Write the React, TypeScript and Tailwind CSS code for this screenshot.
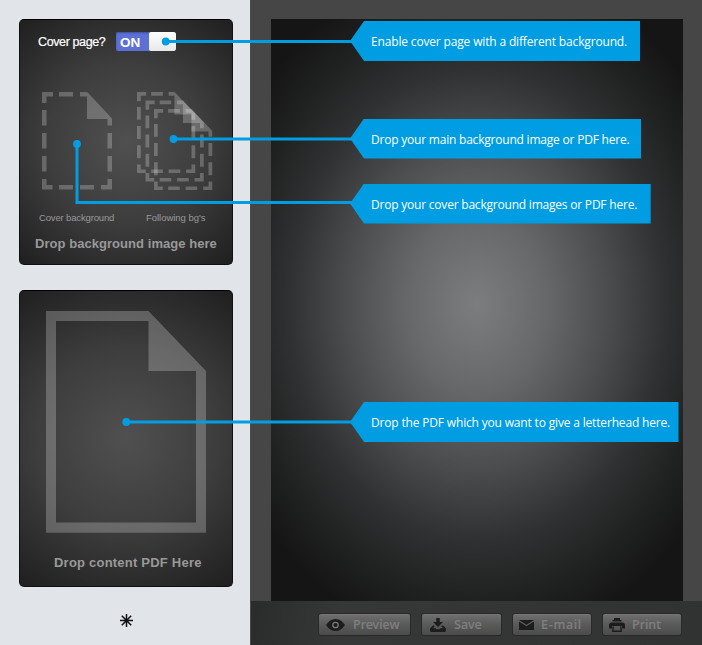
import React from "react";

function DashedPage() {
  return (
    <g fill="#fff" fillOpacity="0.23">
      <path d="M0 0H11V4.5H4.5V11H0ZM17 0H31V4.5H17ZM38 0H45.2L70 26.5V33.5H65.5V27H45V4.5H38Z" />
      <path d="M0 18H4.5V33.5H0ZM0 41H4.5V56.5H0ZM0 64H4.5V79.5H0ZM65.5 41H70V56.5H65.5ZM65.5 64H70V79.5H65.5Z" />
      <path d="M0 87H4.5V93H10.5V97.5H0ZM17 93H31V97.5H17ZM38 93H52V97.5H38ZM59 93H65.5V87H70V97.5H59Z" />
    </g>
  );
}

function Callout({ className, text, textClass }: { className: string; text: string; textClass: string }) {
  return (
    <div
      className={`absolute left-[350px] flex h-10 items-center bg-[#009de2] pl-[21px] text-white [clip-path:polygon(14px_0,100%_0,100%_100%,14px_100%,0_50%)] ${className}`}
    >
      <span className={`whitespace-nowrap pt-[2px] font-['Open_Sans','Noto_Sans',sans-serif] text-[12px] leading-4 ${textClass}`}>{text}</span>
    </div>
  );
}

function ToolButton({ className, label, textClass, children }: { className: string; label: string; textClass: string; children: React.ReactNode }) {
  return (
    <button
      className={`flex h-[23px] items-center rounded-[3px] border border-[#282929] bg-linear-to-b from-[#707070] via-[#5a5a5a] via-50% to-[#4b4b4b] shadow-[inset_0_1px_0_#777] ${className}`}
    >
      {children}
      <span className={`whitespace-nowrap pt-px font-['Noto_Sans',sans-serif] text-[12.5px] font-medium leading-5 text-[#7e7e7e] [-webkit-text-stroke:0.2px_#7e7e7e] ${textClass}`}>{label}</span>
    </button>
  );
}

export default function App() {
  return (
    <div className="relative flex h-[645px] w-[702px] overflow-hidden bg-[#464646] font-['Liberation_Sans',Arial,sans-serif]">
      <aside className="flex w-[250px] shrink-0 flex-col items-center bg-[#e1e4e9] pt-[19px]">
        <section className="mr-[-2px] flex h-[246px] w-[214px] flex-col rounded-[5px] border border-[#101010] border-t-black bg-[radial-gradient(circle_at_50%_50%,#505050_0%,#3d3d3d_50%,#1f1f1f_100%)]">
          <div className="flex h-[43px] items-center pl-[18px]">
            <span className="w-[78px] whitespace-nowrap pt-px text-[12.5px] tracking-[-0.38px] text-white [-webkit-text-stroke:0.2px_white]">Cover page?</span>
            <div className="flex h-[19px] w-[60px] overflow-hidden rounded-[2px] bg-[#5d70d4] shadow-[inset_0_1px_2px_#3e4da4]">
              <span className="w-[33px] pl-[4px] text-[13.5px] font-bold leading-[21px] text-white">ON</span>
              <span className="flex-1 rounded-[2px] bg-linear-to-b from-white to-[#e8e8e8]" />
            </div>
          </div>
          <div className="flex pl-[22px] pt-[29px]">
            <svg width="70" height="99" viewBox="0 0 70 99">
              <DashedPage />
            </svg>
            <svg className="ml-[25.3px]" width="77" height="99" viewBox="0 0 77 99">
              <g transform="scale(.832)"><DashedPage /></g>
              <g transform="translate(8.5 8.5) scale(.832)"><DashedPage /></g>
              <g transform="translate(17 17) scale(.832)"><DashedPage /></g>
            </svg>
          </div>
          <div className="mt-[20px] flex h-[14px] pl-[19px] text-[9.5px] leading-[14px] text-[#999]">
            <span className="w-[107px] whitespace-nowrap tracking-[-0.15px]">Cover background</span>
            <span className="whitespace-nowrap tracking-[-0.03px]">Following bg's</span>
          </div>
          <div className="mt-[10px] whitespace-nowrap pl-[15px] text-[13px] font-bold leading-[18px] tracking-[0.05px] text-[#999]">
            Drop background image here
          </div>
        </section>
        <section className="mr-[-2px] mt-[25px] flex h-[297px] w-[214px] flex-col rounded-[5px] border border-[#101010] border-t-black bg-[radial-gradient(circle_at_50%_50%,#505050_0%,#3d3d3d_50%,#1f1f1f_100%)]">
          <svg className="ml-[26px] mt-5" width="160" height="222" viewBox="0 0 160 222">
            <path fill="#fff" fillOpacity="0.23" fillRule="evenodd" d="M0 0H102.5L160 60V221.7H0ZM10 10V211.5H150V60H102.5V10Z" />
          </svg>
          <div className="mt-[21px] whitespace-nowrap pl-[34px] text-[13px] font-bold leading-[18px] tracking-[0.22px] text-[#999]">
            Drop content PDF Here
          </div>
        </section>
        <svg className="ml-[3px] mt-[26px]" width="15" height="15" viewBox="0 0 15 15" stroke="#101010" strokeWidth="1.5">
          <path d="M7.5 1V14M1 7.5H14M2.8 2.8L12.2 12.2M12.2 2.8L2.8 12.2" />
        </svg>
      </aside>

      <main className="flex w-[452px] flex-col border-l border-[#4b4b4b]">
        <div className="ml-[20px] mt-[19px] h-[582px] w-[412px] bg-[radial-gradient(ellipse_275px_345px_at_50%_49%,#7c7d7f_0%,#67686a_25%,#4b4c4d_48%,#303132_68%,#202121_85%,#151515_100%)]" />
        <footer className="flex h-11 items-start bg-[linear-gradient(100deg,#292c2a,#363837_20%,#313332)] pl-[67px] pt-[12px]">
          <ToolButton className="w-[93px] pl-[7px]" label="Preview" textClass="ml-[8px] tracking-[0px]">
            <svg width="19" height="12" viewBox="0 0 19 12">
              <path fill="#1c1c1c" d="M0 6Q4 0 9.5 0T19 6Q15 12 9.5 12T0 6Z" />
              <circle cx="9.5" cy="6" r="2.7" fill="none" stroke="#777" strokeWidth="1.3" />
            </svg>
          </ToolButton>
          <ToolButton className="ml-[10px] w-[81px] pl-[8px]" label="Save" textClass="ml-[8px]">
            <svg width="16" height="14" viewBox="0 0 16 14" fill="#1c1c1c">
              <path d="M6.3 0H9.7V4H13L8 9L3 4H6.3Z" />
              <path d="M3 7.5L0 10.5V13L1 14H15L16 13V10.5L13 7.5H12L11.3 8.3L13 10.3H10.5L9.5 11.3H6.5L5.5 10.3H3L4.7 8.3L4 7.5Z" />
            </svg>
          </ToolButton>
          <ToolButton className="ml-[10px] w-[80px] pl-[6px]" label="E-mail" textClass="ml-[7px] tracking-[0.7px]">
            <svg width="15" height="10" viewBox="0 0 15 10" fill="#1c1c1c">
              <path d="M0 0H15L7.5 4.8Z" />
              <path d="M0 1.5L7.5 6.2L15 1.5V10H0Z" />
            </svg>
          </ToolButton>
          <ToolButton className="ml-[10px] w-[80px] pl-[6px]" label="Print" textClass="ml-[7px] tracking-[0px]">
            <svg width="16" height="14" viewBox="0 0 16 14">
              <path fill="#1c1c1c" d="M5 0H11V2H12.5V3.5H3.5V2H5ZM2 4.5H14L16 6V10.5H13V8H3V10.5H0V6Z" />
              <path fill="none" stroke="#1c1c1c" strokeWidth="1.4" d="M4.2 8.5L3.8 13.2H12.2L11.8 8.5" />
            </svg>
          </ToolButton>
        </footer>
      </main>

      <svg className="pointer-events-none absolute inset-0" width="702" height="645" viewBox="0 0 702 645" fill="none" stroke="#009de2" strokeWidth="3">
        <path d="M165.7 41.5H352M173.5 139H352M77 144V202.5H352M126.3 422H352" />
        <g fill="#009de2" stroke="none">
          <circle cx="165.7" cy="41.5" r="3.9" />
          <circle cx="173.5" cy="139" r="3.9" />
          <circle cx="77" cy="144" r="3.9" />
          <circle cx="126.3" cy="422" r="3.9" />
        </g>
      </svg>
      <Callout className="top-[21px] w-[290px]" text="Enable cover page with a different background." textClass="tracking-[-0.16px]" />
      <Callout className="top-[118.5px] w-[291px]" text="Drop your main background image or PDF here." textClass="tracking-[-0.21px]" />
      <Callout className="top-[183.5px] w-[300.7px]" text="Drop your cover background images or PDF here." textClass="tracking-[-0.21px]" />
      <Callout className="top-[402px] w-[328.5px]" text="Drop the PDF which you want to give a letterhead here." textClass="tracking-[-0.17px]" />
    </div>
  );
}
